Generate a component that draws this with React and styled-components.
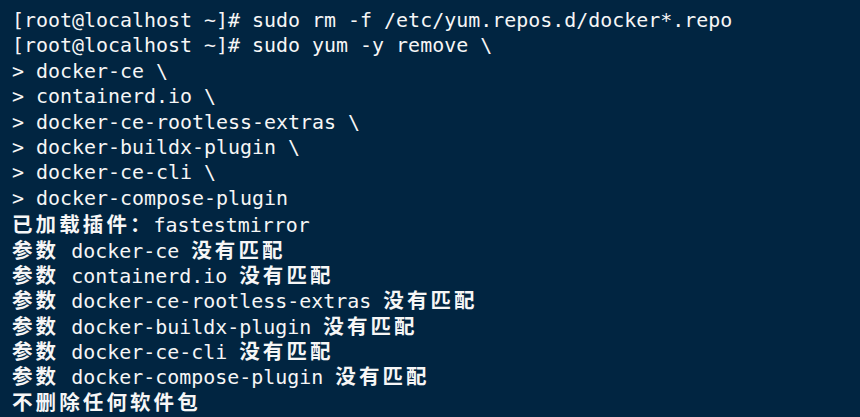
import React from 'react';
import styled, { createGlobalStyle } from 'styled-components';

const GlobalStyle = createGlobalStyle`
    html, body {
        margin: 0;
        padding: 0;
        background: #012541;
    }
`;

const Terminal = styled.div`
    width: 860px;
    height: 417px;
    overflow: hidden;
    box-sizing: border-box;
    padding: 8px 0 0 12px;
    background: #012541;
    color: #f6f6f6;
    font-family: "DejaVu Sans Mono", "Liberation Mono", monospace;
    font-size: 19.95px;
    line-height: 25.4px;
`;

const Line = styled.div`
    white-space: pre;
    height: 25.4px;
`;

// CJK glyphs take two cells in the console
const Wide = styled.span`
    font-family: "Noto Sans CJK SC", "DejaVu Sans Mono", sans-serif;
    font-weight: 700;
    font-size: 20.5px;
    line-height: 25.4px;
    letter-spacing: 3.1px;
`;

const prompt = '[root@localhost ~]# ';
const pkgs = [
    'docker-ce',
    'containerd.io',
    'docker-ce-rootless-extras',
    'docker-buildx-plugin',
    'docker-ce-cli',
    'docker-compose-plugin',
];

const App = () => {
    return (
        <>
            <GlobalStyle />
            <Terminal>
                <Line>{prompt}sudo rm -f /etc/yum.repos.d/docker*.repo</Line>
                <Line>{prompt}sudo yum -y remove \</Line>
                {pkgs.map((p, i) => (
                    <Line key={p}>{'> ' + p + (i < pkgs.length - 1 ? ' \\' : '')}</Line>
                ))}
                <Line><Wide>已加载插件：</Wide>fastestmirror</Line>
                {pkgs.map((p) => (
                    <Line key={'m' + p}><Wide>参数</Wide>{' ' + p + ' '}<Wide>没有匹配</Wide></Line>
                ))}
                <Line><Wide>不删除任何软件包</Wide></Line>
            </Terminal>
        </>
    );
};

export default App;
